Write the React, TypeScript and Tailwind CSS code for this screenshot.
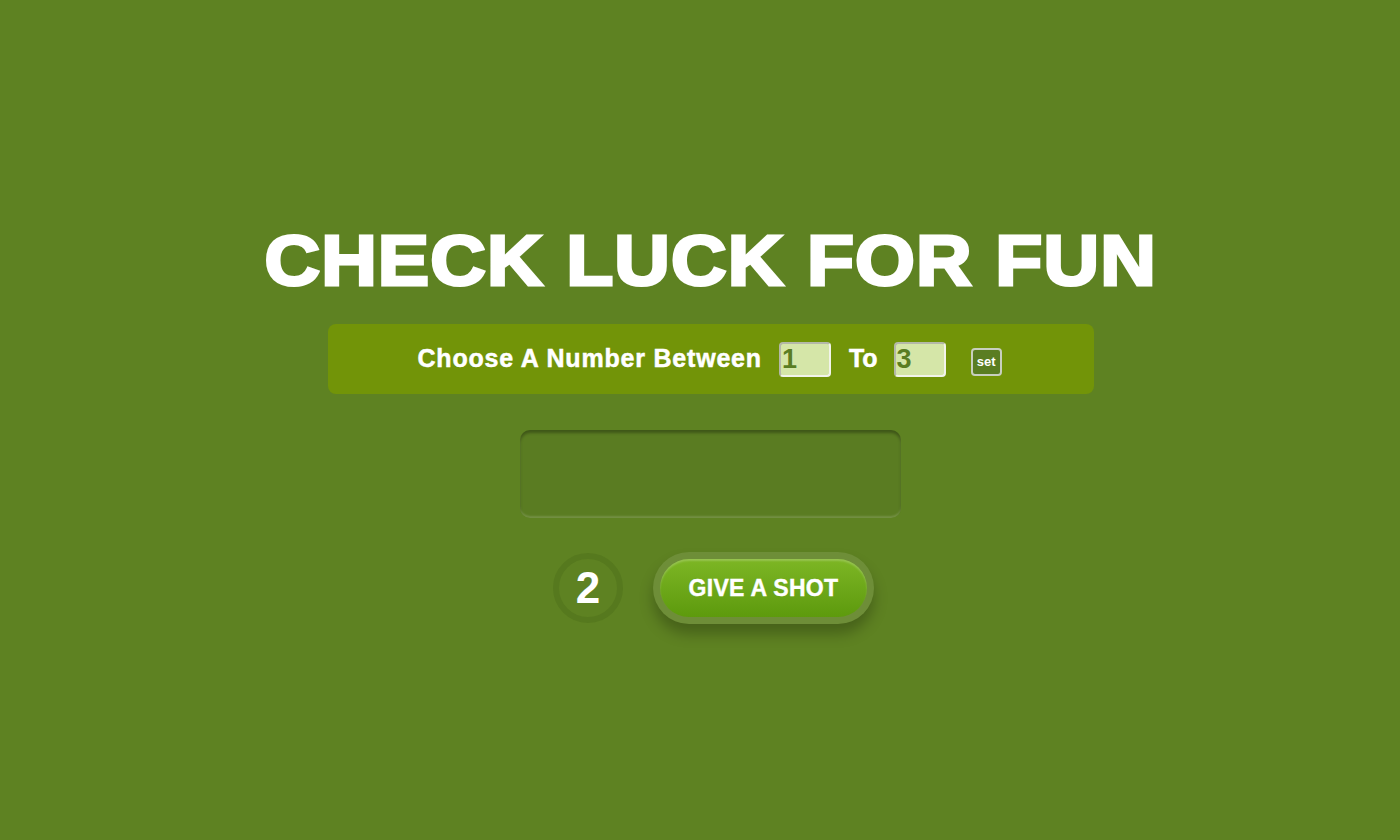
export default function App() {
  return (
    <div
      className="w-[1400px] h-[840px] bg-[#5e8222] flex flex-col items-center pl-[21px]"
      style={{ fontFamily: '"Liberation Sans", Arial, sans-serif' }}
    >
      <h1 className="mt-[226px] text-[70px] leading-[70px] font-bold text-white tracking-[1px] [-webkit-text-stroke:3px_white] scale-x-[1.1]">
        CHECK LUCK FOR FUN
      </h1>
      <div className="mt-[28px] w-[766px] h-[70px] rounded-[8px] bg-[#729408] flex items-center pl-[90px]">
        <span className="text-white font-bold text-[25px] tracking-[0.8px] [-webkit-text-stroke:0.5px_white]">
          Choose A Number Between
        </span>
        <div className="ml-[17px] w-[52px] h-[35px] rounded-[4px] border-2 border-t-[#b4b8a8] border-l-[#b4b8a8] border-b-[#f2f4ea] border-r-[#f2f4ea] bg-[#d5e6a8] text-[#5a7d22] font-bold text-[27px] leading-[30px] pl-[1px]">
          1
        </div>
        <span className="ml-[18px] text-white font-bold text-[25px] [-webkit-text-stroke:0.5px_white]">To</span>
        <div className="ml-[16px] w-[52px] h-[35px] rounded-[4px] border-2 border-t-[#b4b8a8] border-l-[#b4b8a8] border-b-[#f2f4ea] border-r-[#f2f4ea] bg-[#d5e6a8] text-[#5a7d22] font-bold text-[27px] leading-[30px] pl-[1px]">
          3
        </div>
        <div className="ml-[25px] mt-[6px] w-[31px] h-[28px] rounded-[4px] border-2 border-[#c8cfbf] bg-[#5a7d22] text-white font-bold text-[13px] flex items-center justify-center">
          set
        </div>
      </div>
      <div className="mt-[36px] w-[381px] h-[88px] rounded-[10px] bg-[#5a7c22] shadow-[inset_0_3px_3px_rgba(0,0,0,0.3),inset_0_-2px_2px_rgba(255,255,255,0.15)]" />
      <div className="mt-[34px] ml-[6px] flex items-center gap-[30px]">
        <div className="w-[70px] h-[70px] rounded-full border-[6px] border-[#56791e] flex items-center justify-center text-white font-bold text-[44px]">
          2
        </div>
        <div className="w-[221px] h-[72px] rounded-full bg-[rgba(255,255,255,0.1)] p-[7px] shadow-[0_10px_14px_rgba(0,0,0,0.25)]">
          <div className="w-full h-full rounded-full bg-gradient-to-b from-[#7db624] to-[#5d9a0c] shadow-[inset_0_2px_2px_rgba(255,255,255,0.2)] flex items-center justify-center text-white font-bold text-[23px] tracking-[0.3px] [-webkit-text-stroke:0.4px_white]">
            GIVE A SHOT
          </div>
        </div>
      </div>
    </div>
  );
}
